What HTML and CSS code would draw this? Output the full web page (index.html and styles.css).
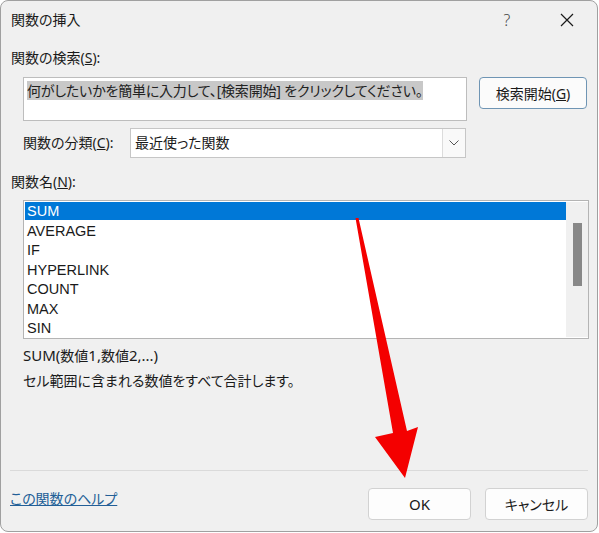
FILE: index.html
```html
<!DOCTYPE html>
<html lang="ja">
<head>
<meta charset="utf-8">
<title>関数の挿入</title>
<link rel="stylesheet" href="styles.css">
</head>
<body>
<div class="dialog">
  <div class="titlebar">
    <div class="title">関数の挿入</div>
    <div class="tb-btn tb-help">?</div>
    <div class="tb-btn">
      <svg width="14" height="14" viewBox="0 0 14 14"><path d="M1 1L13 13M13 1L1 13" stroke="#1a1a1a" stroke-width="1.2" fill="none"/></svg>
    </div>
  </div>
  <div class="content">
    <div class="label">関数の検索(<u>S</u>):</div>
    <div class="search-row">
      <div class="textarea"><span class="sel-text">何がしたいかを簡単に入力して、[検索開始] をクリックしてください。</span></div>
      <div class="btn btn-default">検索開始(<u>G</u>)</div>
    </div>
    <div class="cat-row">
      <div class="cat-label">関数の分類(<u>C</u>):</div>
      <div class="select">
        <div class="select-value">最近使った関数</div>
        <div class="select-arrow">
          <svg width="10" height="6" viewBox="0 0 10 6"><path d="M0.5 0.5L5 5L9.5 0.5" stroke="#555" stroke-width="1" fill="none"/></svg>
        </div>
      </div>
    </div>
    <div class="label label-names">関数名(<u>N</u>):</div>
    <div class="listbox">
      <div class="items">
        <div class="item selected">SUM</div>
        <div class="item">AVERAGE</div>
        <div class="item">IF</div>
        <div class="item">HYPERLINK</div>
        <div class="item">COUNT</div>
        <div class="item">MAX</div>
        <div class="item">SIN</div>
      </div>
      <div class="scrollbar"><div class="thumb"></div></div>
    </div>
    <div class="desc-syntax"><span class="lat">SUM(</span>数値<span class="lat">1,</span>数値<span class="lat">2,...)</span></div>
    <div class="desc">セル範囲に含まれる数値をすべて合計します。</div>
  </div>
  <div class="separator"></div>
  <div class="footer">
    <a class="help-link" href="#">この関数のヘルプ</a>
    <div class="buttons">
      <div class="btn btn-foot lat">OK</div>
      <div class="btn btn-foot">キャンセル</div>
    </div>
  </div>
  <svg class="arrow" width="599" height="533" viewBox="0 0 599 533">
    <polygon points="355.5,218 358.5,218 407,431 418,427 405,478 375,437 393,433" fill="#f40000"/>
  </svg>
</div>
</body>
</html>
```
FILE: styles.css
```css
html, body {
  margin: 0;
  padding: 0;
  background: #ffffff;
}
body {
  width: 599px;
  height: 533px;
  font-family: "Noto Sans", "Noto Sans CJK JP", sans-serif;
  font-size: 14px;
  font-feature-settings: "palt";
  color: #1a1a1a;
}
.lat {
  font-size: 15px;
}
.dialog {
  position: relative;
  box-sizing: border-box;
  width: 598px;
  height: 532px;
  margin: 0;
  border: 1px solid #a0a0a0;
  border-radius: 8px;
  background: #f0f0f0;
  display: flex;
  flex-direction: column;
  overflow: hidden;
}
.titlebar {
  height: 38px;
  display: flex;
  align-items: center;
  padding-left: 10px;
  flex: none;
}
.title {
  flex: 1;
  line-height: 20px;
}
.tb-btn {
  width: 60px;
  height: 38px;
  display: flex;
  align-items: center;
  justify-content: center;
  color: #444;
}
.tb-help {
  font-size: 16px;
  font-weight: 300;
}
.content {
  padding: 0 9px 0 10px;
  display: flex;
  flex-direction: column;
  flex: 1;
}
.label {
  height: 20px;
  line-height: 20px;
  margin-top: 9px;
}
.search-row {
  display: flex;
  margin-top: 9px;
  padding-left: 12px;
  align-items: flex-start;
}
.textarea {
  box-sizing: border-box;
  width: 444px;
  height: 44px;
  background: #fff;
  border: 1px solid #bdbdbd;
  padding: 3px 3px;
  line-height: 19px;
  letter-spacing: -0.2px;
}
.sel-text {
  background: #c8c8c8;
  color: #222;
}
.btn {
  box-sizing: border-box;
  display: flex;
  align-items: center;
  justify-content: center;
  background: #fbfbfb;
  border-radius: 4px;
}
.btn-default {
  width: 108px;
  height: 32px;
  margin-left: 12px;
  border: 1px solid #6f95b4;
}
.cat-row {
  display: flex;
  align-items: center;
  margin-top: 7px;
  padding-left: 12px;
}
.cat-label {
  width: 107px;
  line-height: 20px;
}
.select {
  box-sizing: border-box;
  width: 336px;
  height: 30px;
  display: flex;
  background: #fff;
  border: 1px solid #c6c6c6;
}
.select-value {
  flex: 1;
  padding-left: 4px;
  line-height: 28px;
}
.select-arrow {
  width: 22px;
  border-left: 1px solid #dcdcdc;
  background: #f9f9f9;
  display: flex;
  align-items: center;
  justify-content: center;
}
.label-names {
  margin-top: 14px;
}
.listbox {
  box-sizing: border-box;
  margin: 8px 0 0 12px;
  width: 566px;
  height: 139px;
  border: 1px solid #b4b4b4;
  background: #fff;
  display: flex;
  padding: 1px 0 1px 1px;
}
.items {
  flex: 1;
  font-family: "Liberation Sans", sans-serif;
  font-size: 14.5px;
}
.item {
  height: 19.4px;
  line-height: 20px;
  padding-left: 2px;
}
.item.selected {
  background: #0078d7;
  color: #fff;
  height: 18px;
  line-height: 18px;
  margin-bottom: 1px;
}
.scrollbar {
  width: 22px;
  background: #f0f0f0;
  display: flex;
  justify-content: center;
  padding-top: 21px;
}
.thumb {
  width: 9px;
  height: 63px;
  background: #888;
}
.desc-syntax {
  margin-top: 6px;
  padding-left: 12px;
  line-height: 20px;
}
.desc {
  margin-top: 5px;
  padding-left: 12px;
  line-height: 20px;
}
.separator {
  height: 1px;
  background: #dadada;
  margin: 0 9px 0 9px;
  flex: none;
}
.footer {
  height: 60px;
  display: flex;
  align-items: flex-start;
  padding: 0 9px 0 9px;
  flex: none;
  box-sizing: border-box;
  justify-content: space-between;
}
.help-link {
  color: #225f97;
  text-decoration: underline;
  line-height: 20px;
  margin-top: 18px;
}
.buttons {
  display: flex;
  gap: 14px;
  margin-top: 17px;
}
.btn-foot {
  width: 103px;
  height: 32px;
  border: 1px solid #d2d2d2;
  background: #fdfdfd;
}
.arrow {
  position: absolute;
  left: -1px;
  top: -1px;
  pointer-events: none;
}
```
